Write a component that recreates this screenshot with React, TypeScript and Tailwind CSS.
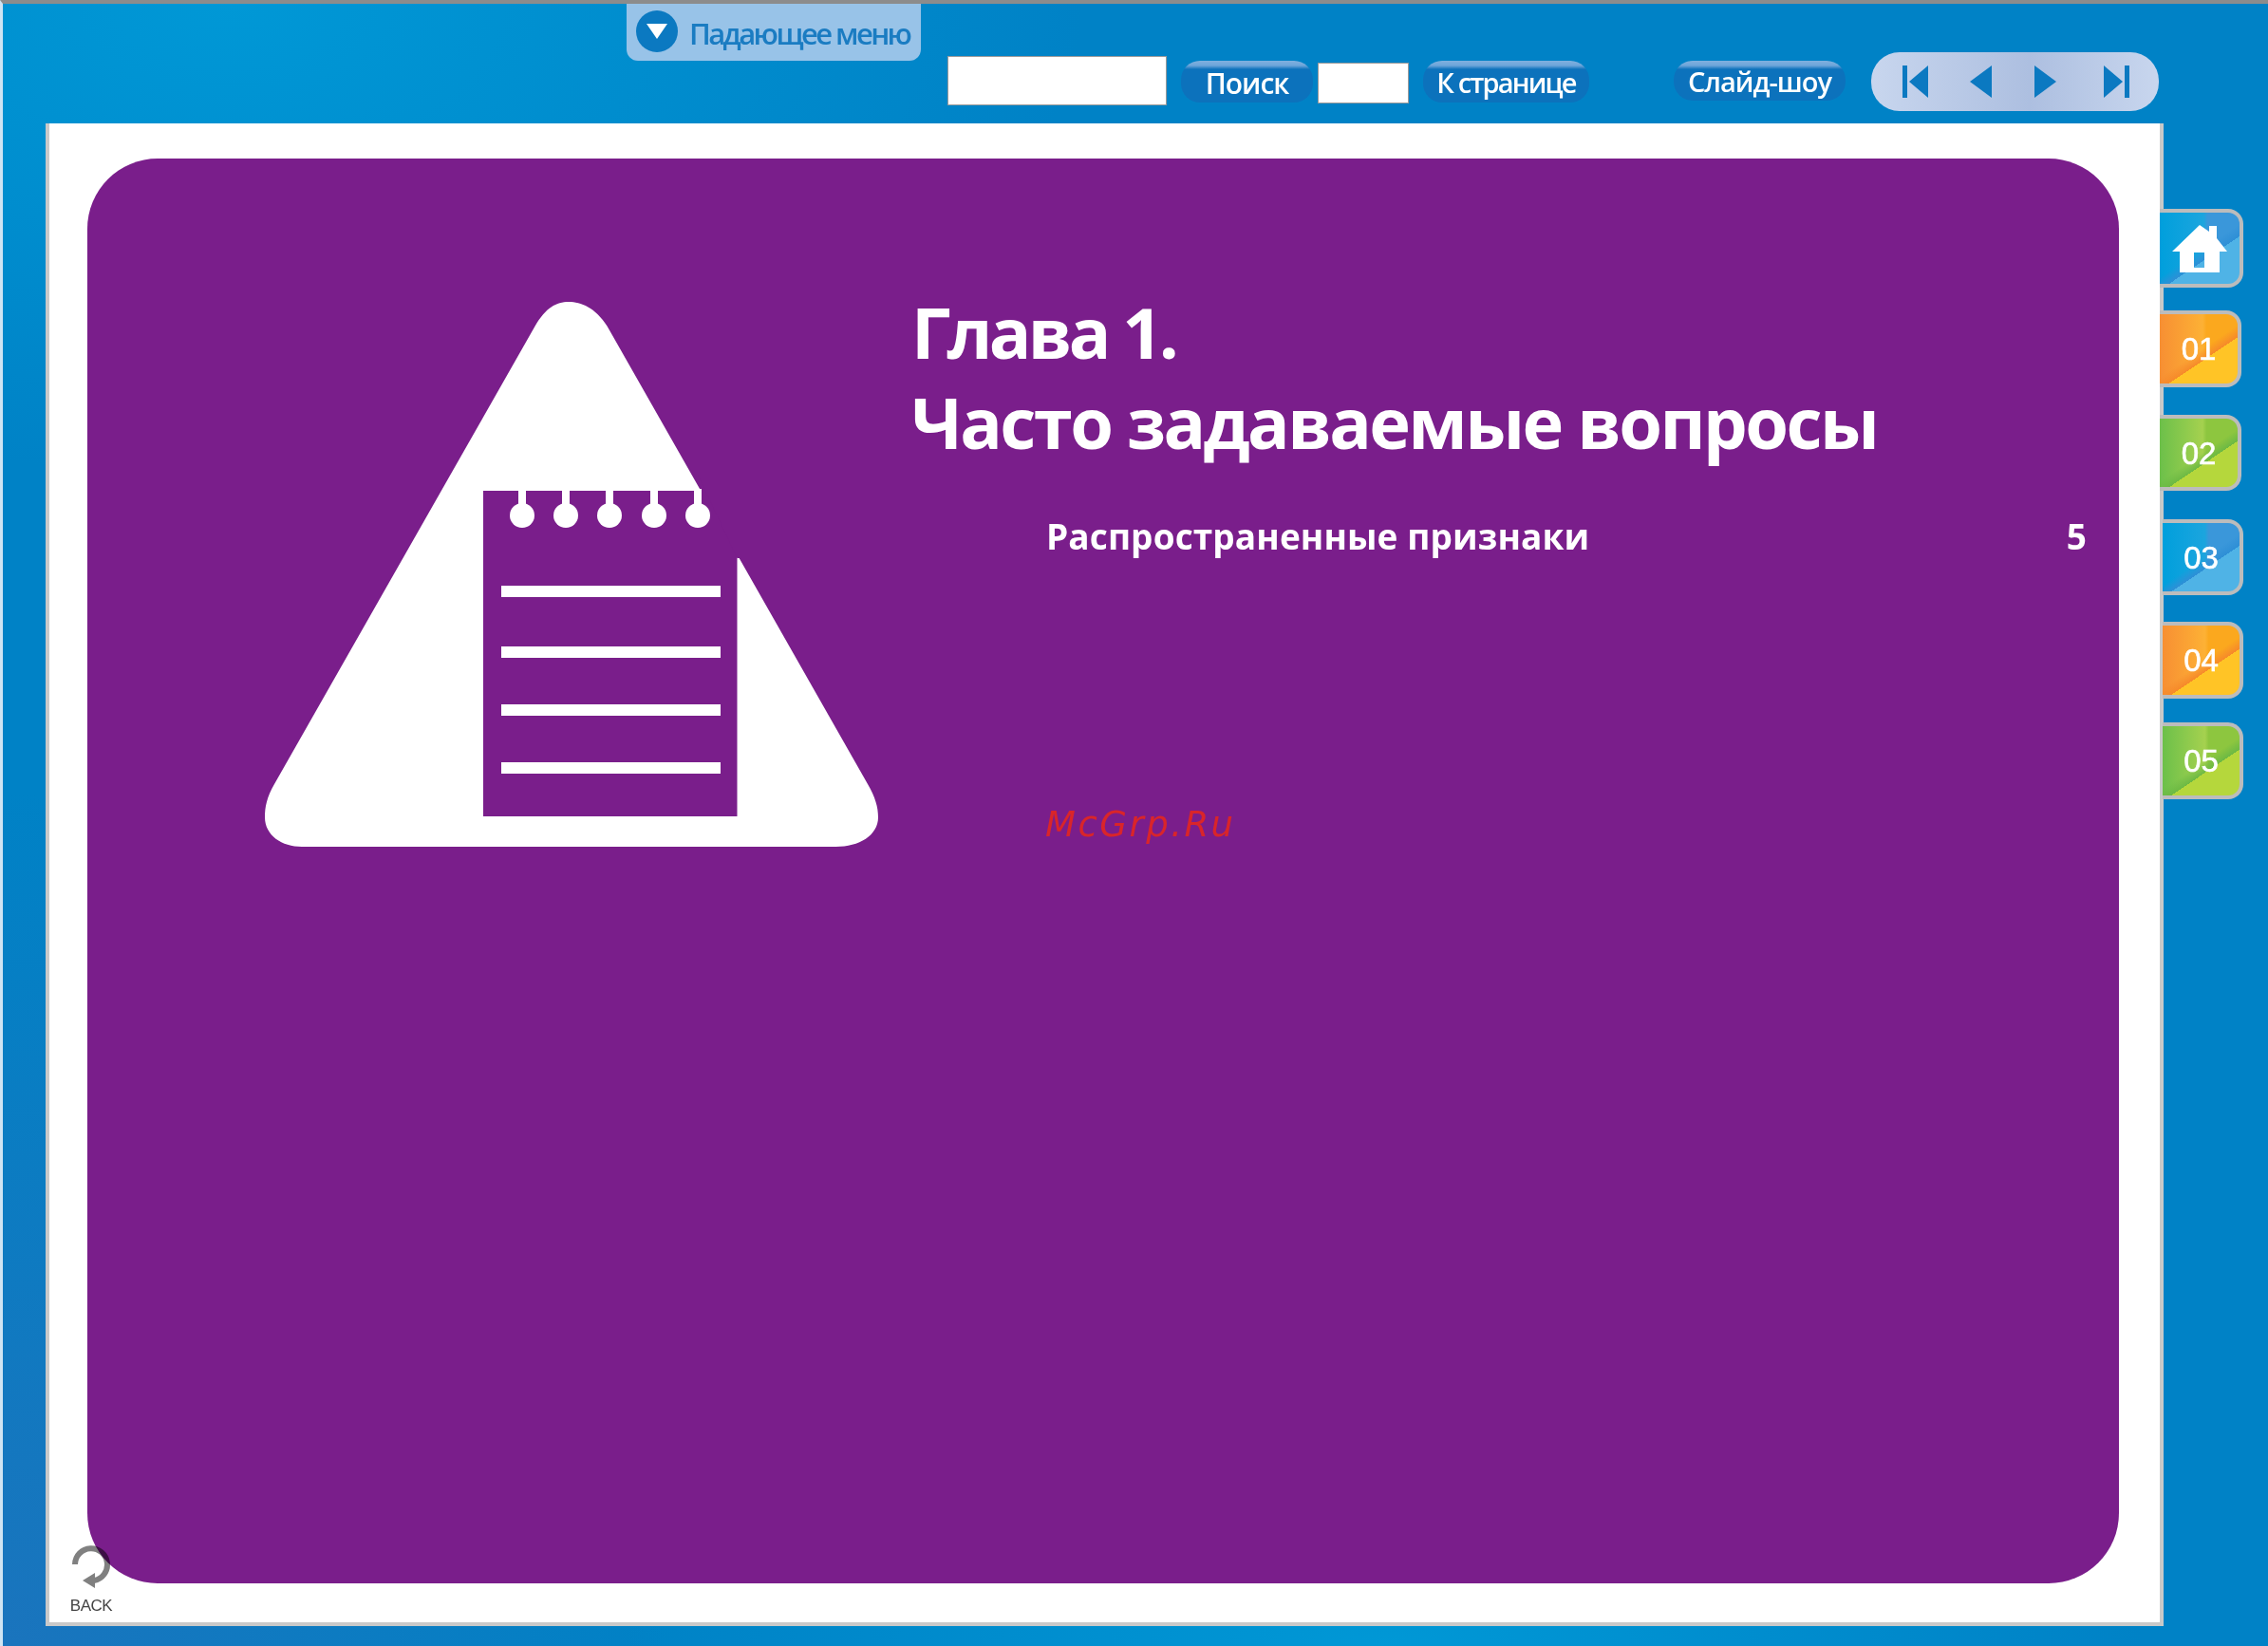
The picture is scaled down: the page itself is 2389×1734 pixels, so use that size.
const Tab = ({ cls, h, mt, label }: { cls: string; h: string; mt: string; label: string }) => (
  <div className={`${h} ${mt} ${cls} flex items-center justify-center rounded-r-[16px] border-[4px] border-l-0 border-[#bcbcbc] font-['Liberation_Sans',sans-serif] text-[33px] leading-none text-white [-webkit-text-stroke:0.6px_white]`}>
    {label}
  </div>
);

const blue = "bg-[linear-gradient(146deg,transparent_62%,#4fb3e6_62%),linear-gradient(146deg,transparent_52%,#2e8fd6_62%,transparent_62%),linear-gradient(90deg,#009fdc,#1ca5de_55%,#3a97da_60%,#3a97da)]";
const orange = "bg-[linear-gradient(146deg,transparent_62%,#ffc426_62%),linear-gradient(146deg,transparent_52%,#f6892a_62%,transparent_62%),linear-gradient(90deg,#f78f33,#fdb135_55%,#fba81e_60%,#fba81e)]";
const green = "bg-[linear-gradient(146deg,transparent_62%,#b5d73c_62%),linear-gradient(146deg,transparent_52%,#6cb944_62%,transparent_62%),linear-gradient(90deg,#6cc04a,#a5d14f_55%,#8dc63f_60%,#8dc63f)]";

const Button = ({ w, h, ml, mt, children, text }: { w: string; h: string; ml: string; mt: string; children: string; text: string }) => (
  <div className={`${w} ${h} ${ml} ${mt} ${text} flex items-center justify-center rounded-[20px] bg-[linear-gradient(#7fb0de_0,#6ea6da_5px,#0c72bc_9px)] font-['Open_Sans',sans-serif] font-semibold leading-none text-white`}>
    {children}
  </div>
);

export default function App() {
  return (
    <div className="box-border h-[1734px] w-[2389px] overflow-hidden border-t-4 border-l-[3px] border-t-[#8c8c8c] border-l-[#cfe4f3] bg-[radial-gradient(ellipse_900px_500px_at_10%_0%,#0098d6,transparent),radial-gradient(ellipse_700px_900px_at_0%_100%,#1a74bd,transparent),radial-gradient(ellipse_800px_260px_at_61%_100%,#0098d6,transparent),linear-gradient(#0082c6,#0082c6)]">
      <header className="flex h-[126px] items-start pl-[657px]">
        <div className="flex h-[60px] w-[310px] items-center rounded-b-[12px] bg-[#98c3e8] pb-[2px] pl-[10px]">
          <span className="flex h-[44px] w-[44px] items-center justify-center rounded-full bg-[#0b79c1]">
            <svg width="24" height="18" viewBox="0 0 24 18"><path d="M1 1h22L12 17z" fill="#fff" /></svg>
          </span>
          <span className="ml-[12px] mt-[5px] font-['Open_Sans',sans-serif] text-[31px] font-semibold leading-none tracking-[-2.6px] text-[#1a7cc2]">Падающее меню</span>
        </div>
        <div className="ml-[28px] mt-[55px] h-[52px] w-[231px] border border-[#9a9a9a] bg-white" />
        <Button w="w-[139px]" h="h-[44px]" ml="ml-[15px]" mt="mt-[60px]" text="pt-[4px] text-[30px] tracking-[-1px]">Поиск</Button>
        <div className="ml-[5px] mt-[62px] h-[43px] w-[96px] border border-[#9a9a9a] bg-white" />
        <Button w="w-[175px]" h="h-[44px]" ml="ml-[15px]" mt="mt-[60px]" text="text-[29px] tracking-[-1.8px]">К странице</Button>
        <Button w="w-[181px]" h="h-[42px]" ml="ml-[89px]" mt="mt-[60px]" text="text-[29px] tracking-[-1px]">Слайд-шоу</Button>
        <nav className="ml-[27px] mt-[51px] flex h-[62px] w-[303px] items-center rounded-[30px] bg-[linear-gradient(90deg,#c8d6ee,#adbfe0_55%,#c8d6ee)] pl-[33px]">
          <svg width="27" height="34" viewBox="0 0 27 34" fill="#0b79c1"><rect width="5" height="34" /><path d="M7 17 27 0v34z" /></svg>
          <svg className="ml-[44px]" width="23" height="34" viewBox="0 0 23 34" fill="#0b79c1"><path d="M0 17 23 0v34z" /></svg>
          <svg className="ml-[45px]" width="23" height="34" viewBox="0 0 23 34" fill="#0b79c1"><path d="M23 17 0 0v34z" /></svg>
          <svg className="ml-[50px]" width="27" height="34" viewBox="0 0 27 34" fill="#0b79c1"><rect x="22" width="5" height="34" /><path d="M20 17 0 0v34z" /></svg>
        </nav>
      </header>

      <div className="flex items-start">
        <main className="relative ml-[45px] box-border h-[1583px] w-[2231px] border-x-[4px] border-b-[4px] border-[#c9c9c9] bg-white pl-[40px] pt-[37px]">
          <section className="flex h-[1501px] w-[2140px] items-start rounded-[74px] bg-[#7a1e8b]">
            <svg className="ml-[178px] mt-[143px] shrink-0" width="665" height="590" viewBox="270 310 665 590">
              <path fill="#fff" d="M563.6 343.5C575 324 586 318 599 318C612 318 627 324 639.5 343.5L914 826C922 840 925 850 925 861C925 880 905 892 880.5 892H318C297 892 279 880 279 861C279 850 281 840 289 826Z" />
              <rect x="509" y="517" width="267.5" height="343" fill="#7a1e8b" />
              <path fill="#7a1e8b" d="M735 500H800V588H776.5Z" />
              <g fill="#fff">
                <rect x="528" y="617" width="231" height="12" />
                <rect x="528" y="681" width="231" height="12" />
                <rect x="528" y="742" width="231" height="12" />
                <rect x="528" y="803" width="231" height="12" />
                {[550, 596, 642, 689, 735].map((x) => (
                  <g key={x}>
                    <rect x={x - 4} y="515" width="8" height="20" />
                    <circle cx={x} cy="543" r="13" />
                  </g>
                ))}
              </g>
            </svg>
            <div className="ml-[25px] w-[1272px] pr-[34px] font-['Open_Sans',sans-serif] font-bold text-white">
              <h1 className="mt-[135px] text-[74px] leading-[95px] tracking-[-2.6px]">
                <span className="tracking-[-3.7px]">Глава 1.</span>
                <br />
                Часто задаваемые вопросы
              </h1>
              <div className="mt-[48px] flex items-center justify-between pl-[142px] text-[37px] leading-[50px] tracking-[0.1px]">
                <span>Распространенные признаки</span>
                <span>5</span>
              </div>
              <p className="ml-[141px] mt-[257px] font-['DejaVu_Sans',sans-serif] text-[37px] font-normal italic leading-[44px] tracking-[2.5px] text-[#d9252a]">McGrp.Ru</p>
            </div>
          </section>
          <div className="absolute left-[19px] top-[1498px] flex w-[50px] flex-col items-center text-[#444]">
            <svg className="mix-blend-multiply" width="46" height="46" viewBox="0 0 46 46" fill="none">
              <path d="M6 20A17 17 0 1 1 26 37" stroke="#808080" strokeWidth="6" />
              <path d="M14 37 27 29V45Z" fill="#808080" />
            </svg>
            <span className="mt-[9px] font-['Liberation_Sans',sans-serif] text-[17px] leading-none tracking-[-0.5px]">BACK</span>
          </div>
        </main>

        <aside className="relative -ml-[4px] flex flex-col items-start">
          <div className={`${blue} mt-[90px] flex h-[83px] w-[88px] items-center justify-center rounded-r-[16px] border-[4px] border-l-0 border-[#bcbcbc]`}>
            <svg width="58" height="50" viewBox="0 0 58 50" fill="#fff">
              <path fillRule="evenodd" d="M29 0 39 7V1H47V14L58 28 50 28V50H8V28H0ZM23 29V45H34V29Z" />
            </svg>
          </div>
          <Tab cls={`w-[86px] ${orange}`} h="h-[81px]" mt="mt-[24px]" label="01" />
          <Tab cls={`w-[86px] ${green}`} h="h-[80px]" mt="mt-[29px]" label="02" />
          <Tab cls={`ml-[3px] w-[85px] ${blue}`} h="h-[80px]" mt="mt-[30px]" label="03" />
          <Tab cls={`ml-[3px] w-[85px] ${orange}`} h="h-[81px]" mt="mt-[28px]" label="04" />
          <Tab cls={`ml-[3px] w-[85px] ${green}`} h="h-[81px]" mt="mt-[25px]" label="05" />
        </aside>
      </div>
    </div>
  );
}
